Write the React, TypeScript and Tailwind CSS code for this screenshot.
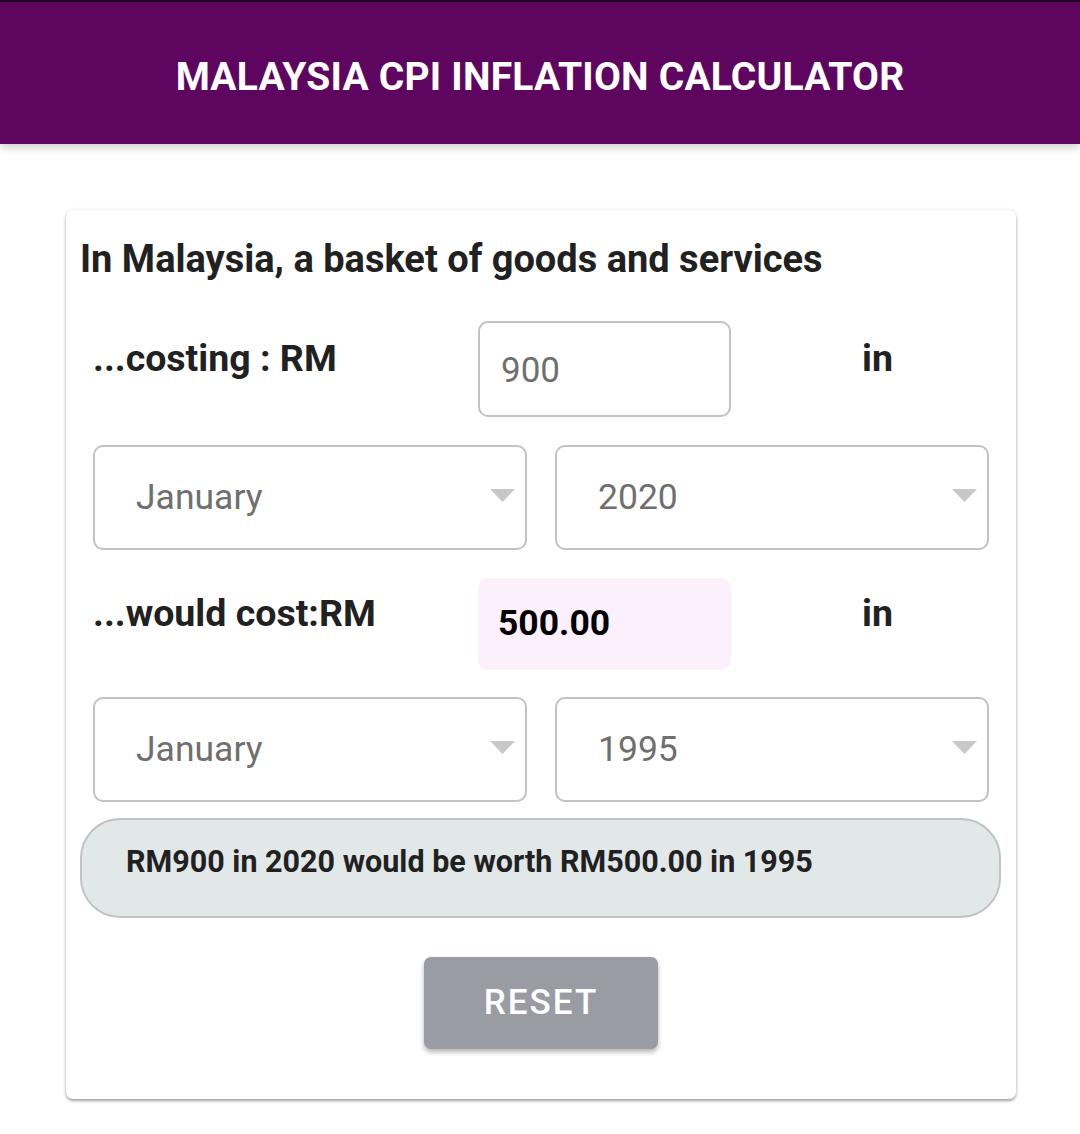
import { ChangeEvent, useState } from 'react';

const MONTHS = [
  'January', 'February', 'March', 'April', 'May', 'June',
  'July', 'August', 'September', 'October', 'November', 'December',
];

const YEARS = Array.from({ length: 2021 - 1960 }, (_, i) => String(2020 - i));

interface SelectBoxProps {
  value: string;
  options: string[];
  onChange: (v: string) => void;
}

function SelectBox({ value, options, onChange }: SelectBoxProps) {
  return (
    <div className="relative flex-1">
      <select
        value={value}
        onChange={(e: ChangeEvent<HTMLSelectElement>) => onChange(e.target.value)}
        className="w-full h-[105px] appearance-none rounded-[10px] border-2 border-[#c2c2c2] bg-white pl-[41px] text-[35.5px] text-[#6f6f6f] outline-none"
      >
        {options.map((o) => (
          <option key={o} value={o}>{o}</option>
        ))}
      </select>
      {/* dropdown caret */}
      <svg
        className="pointer-events-none absolute right-[12px] top-[44px]"
        width="25"
        height="13"
        viewBox="0 0 25 13"
      >
        <path d="M0 0 L25 0 L12.5 13 Z" fill="#c8c8c8" />
      </svg>
    </div>
  );
}

export default function App() {
  const [amount, setAmount] = useState('900');
  const [fromMonth, setFromMonth] = useState('January');
  const [fromYear, setFromYear] = useState('2020');
  const [toMonth, setToMonth] = useState('January');
  const [toYear, setToYear] = useState('1995');

  const result = '500.00';

  const handleReset = () => {
    setAmount('');
    setFromMonth('January');
    setFromYear('2020');
    setToMonth('January');
    setToYear('1995');
  };

  return (
    <div className="min-h-[1134px] bg-white font-['Roboto','Liberation_Sans',sans-serif] text-[#212121]">
      {/* Header */}
      <header className="h-[144px] border-t-2 border-[#1e0620] bg-[#5e065f] pt-[8px] shadow-[0_4px_8px_rgba(0,0,0,0.18)] flex items-center justify-center">
        <h1 className="text-[39px] font-bold tracking-[0.2px] text-white">MALAYSIA CPI INFLATION CALCULATOR</h1>
      </header>

      <main className="pl-[66px] pr-[64px] pt-[66px] pb-[36px]">
        <div className="rounded-[7px] bg-white shadow-[0_2px_3px_rgba(0,0,0,0.35),0_0_4px_rgba(0,0,0,0.08)] px-[14px] pt-[26px] pb-[50px]">
          <h2 className="text-[38px] font-bold leading-[46px]">In Malaysia, a basket of goods and services</h2>

          {/* costing row */}
          <div className="mt-[39px] flex items-start pl-[13px]">
            <div className="w-[385px] pt-[14px] text-[37.5px] font-bold leading-[46px]">...costing : RM</div>
            <input
              value={amount}
              onChange={(e) => setAmount(e.target.value)}
              className="w-[253px] h-[96px] rounded-[10px] border-2 border-[#c2c2c2] px-[21px] pt-[2px] text-[35px] text-[#6f6f6f] outline-none"
            />
            <div className="flex-1 pt-[14px] pl-[131px] text-[37.5px] font-bold leading-[46px]">in</div>
          </div>

          <div className="mt-[28px] flex gap-[28px] px-[13px]">
            <SelectBox value={fromMonth} options={MONTHS} onChange={setFromMonth} />
            <SelectBox value={fromYear} options={YEARS} onChange={setFromYear} />
          </div>

          {/* would cost row */}
          <div className="mt-[28px] flex items-start pl-[13px]">
            <div className="w-[385px] pt-[12px] text-[37.5px] font-bold leading-[46px]">...would cost:RM</div>
            <div className="w-[253px] h-[92px] rounded-[10px] bg-[#fcf0fc] px-[20px] pt-[22px] text-[35.5px] font-bold leading-[46px] text-black">
              {result}
            </div>
            <div className="flex-1 pt-[12px] pl-[131px] text-[37.5px] font-bold leading-[46px]">in</div>
          </div>

          <div className="mt-[27px] flex gap-[28px] px-[13px]">
            <SelectBox value={toMonth} options={MONTHS} onChange={setToMonth} />
            <SelectBox value={toYear} options={YEARS} onChange={setToYear} />
          </div>

          {/* result summary */}
          <div className="mt-[16px] mr-[1px] h-[100px] rounded-[40px] border-2 border-[#c2c2c2] bg-[#e2e8e8] pl-[44px] pt-[23px] text-[30.5px] font-bold leading-[38px]">
            RM{amount} in {fromYear} would be worth RM{result} in {toYear}
          </div>

          <div className="mt-[39px] flex justify-center">
            <button
              onClick={handleReset}
              className="w-[234px] h-[92px] rounded-[7px] bg-[#9a9ca3] text-[35px] font-medium tracking-[2px] text-white shadow-[0_3px_5px_rgba(0,0,0,0.3)]"
            >
              RESET
            </button>
          </div>
        </div>
      </main>
    </div>
  );
}
